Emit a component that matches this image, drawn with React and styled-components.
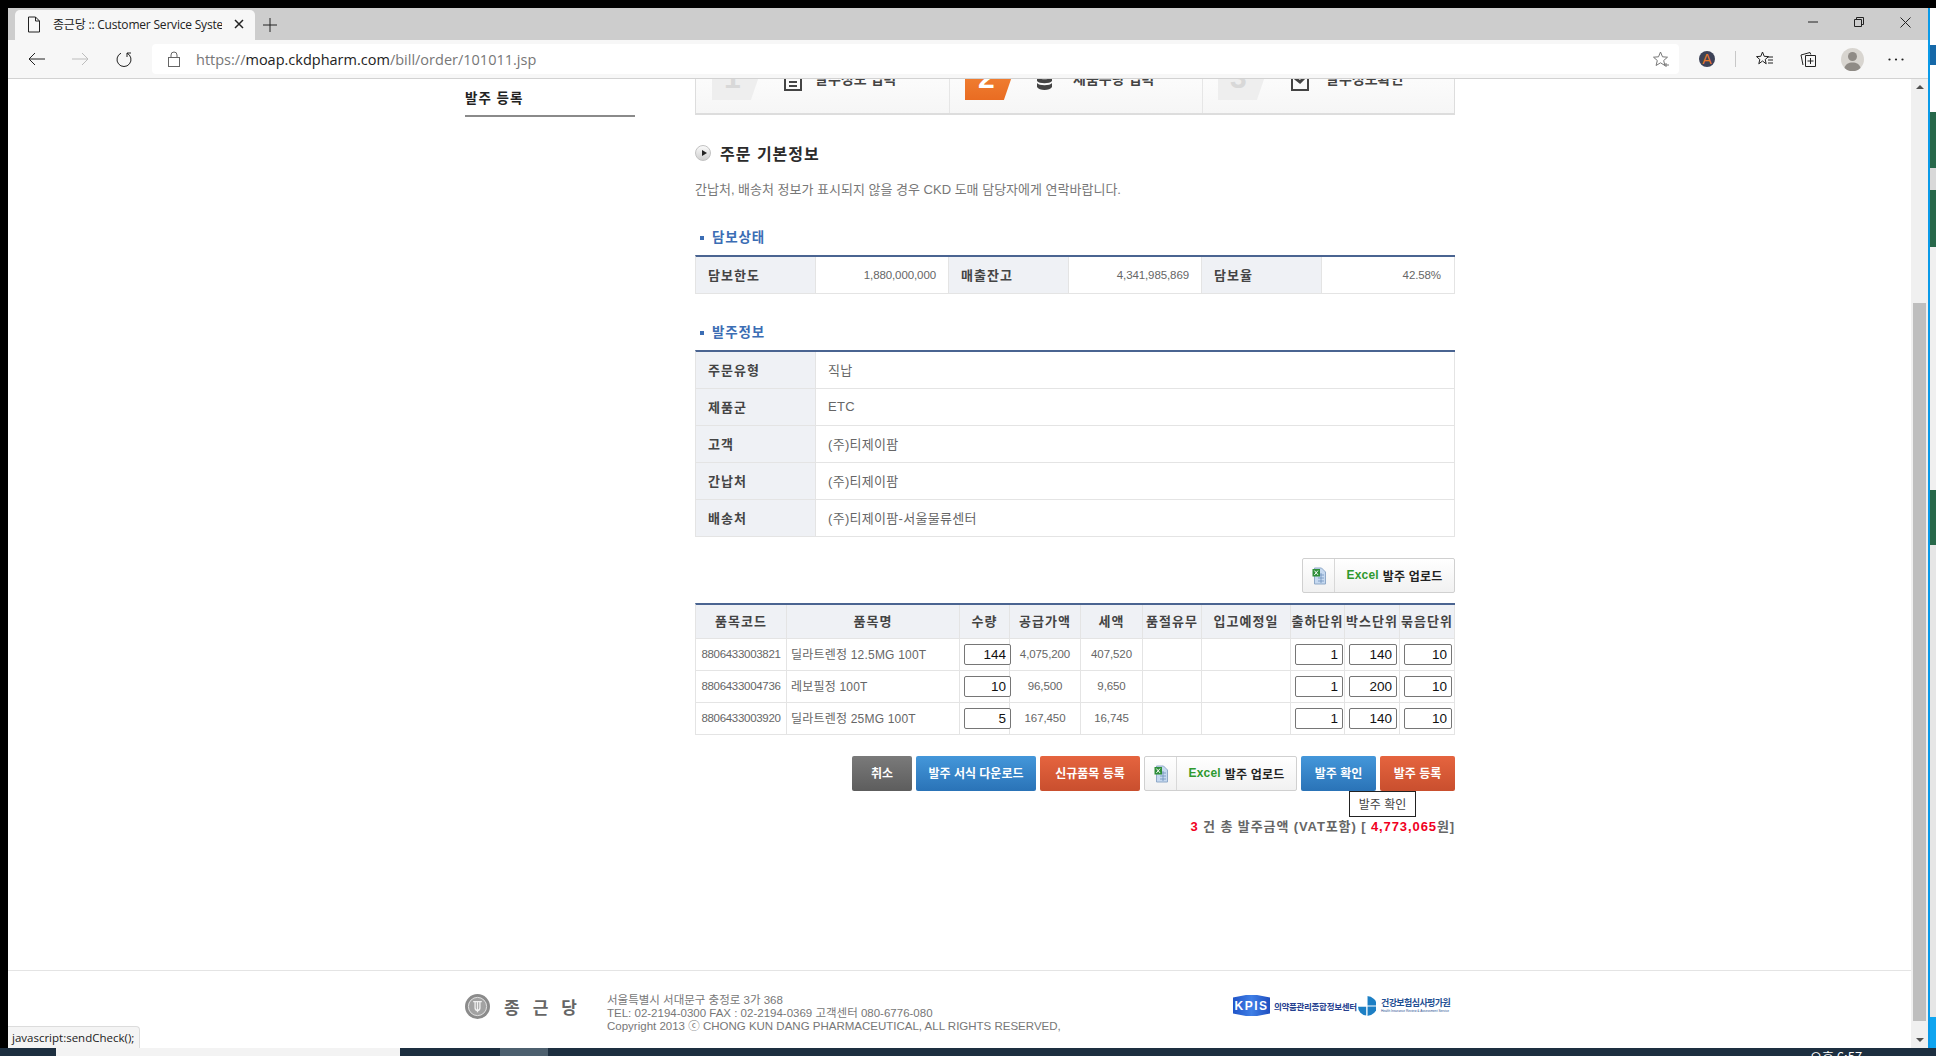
import React from 'react';
import styled, { createGlobalStyle } from 'styled-components';

const KR = `"Liberation Sans", "Noto Sans CJK KR", sans-serif`;

const GlobalStyle = createGlobalStyle`
  * { box-sizing: border-box; }
  html, body { margin: 0; height: 100%; overflow: hidden; background: #000; }
  body { font-family: ${KR}; }
`;

const Desktop = styled.div`
  width: 1936px;
  height: 1056px;
  display: flex;
  flex-direction: column;
  background: #000;
`;

const DesktopBody = styled.div`
  flex: 1;
  min-height: 0;
  display: flex;
  padding: 8px 0 0 8px;
`;

const Window = styled.div`
  position: relative;
  width: 1920px;
  display: flex;
  flex-direction: column;
  background: #fff;
`;

/* ---------- browser chrome ---------- */
const TabStrip = styled.div`
  height: 32px;
  flex: none;
  display: flex;
  align-items: flex-end;
  padding-left: 7px;
  background: #cdcdcd;
`;

const Tab = styled.div`
  width: 240px;
  height: 30px;
  display: flex;
  align-items: center;
  padding: 0 11px 2px 12px;
  background: #f7f7f7;
  border-radius: 5px 5px 0 0;
`;

const TabTitle = styled.span`
  flex: 1;
  margin: 0 12px;
  font: 12px "Open Sans", "Noto Sans CJK KR", sans-serif;
  letter-spacing: -0.2px;
  color: #222;
  white-space: nowrap;
  overflow: hidden;
`;

const NewTab = styled.div`
  width: 30px;
  height: 30px;
  display: flex;
  align-items: center;
  justify-content: center;
`;

const WindowButtons = styled.div`
  margin-left: auto;
  height: 32px;
  display: flex;
  align-items: center;
  padding-bottom: 4px;
`;

const WindowButton = styled.div`
  width: 46px;
  display: flex;
  justify-content: center;
`;

const Toolbar = styled.div`
  height: 39px;
  flex: none;
  display: flex;
  align-items: center;
  padding: 0 6px;
  background: #f7f7f7;
  border-bottom: 1px solid #d2d2d2;
`;

const ToolButton = styled.div`
  width: 44px;
  height: 30px;
  flex: none;
  display: flex;
  align-items: center;
  justify-content: center;
`;

const AddressBar = styled.div`
  width: 1527px;
  height: 30px;
  margin: 0 6px;
  display: flex;
  align-items: center;
  padding: 0 9px 0 15px;
  background: #fff;
  border-radius: 4px;
`;

const Url = styled.div`
  margin-left: 15px;
  font: 14.5px "Open Sans", sans-serif;
  color: #777;
  flex: 1;
  b { font-weight: 400; color: #222; }
`;

const ToolSeparator = styled.div`
  width: 1px;
  height: 16px;
  margin: 0 6px;
  background: #c8c8c8;
`;

const ExtensionBadge = styled.div`
  width: 16px;
  height: 16px;
  border-radius: 50%;
  display: flex;
  align-items: center;
  justify-content: center;
  background: #3d4257;
  color: #e8782a;
  font: 400 14px "Liberation Sans", sans-serif;
`;

/* ---------- page ---------- */
const Viewport = styled.div`
  flex: 1;
  min-height: 0;
  display: flex;
`;

const Page = styled.div`
  flex: 1;
  min-width: 0;
  display: flex;
  flex-direction: column;
  overflow: hidden;
  background: #fff;
`;

const Scrollbar = styled.div`
  width: 17px;
  flex: none;
  display: flex;
  flex-direction: column;
  align-items: center;
  background: #f0f0f0;
`;

const ScrollArrow = styled.div`
  height: 16px;
  flex: none;
  display: flex;
  align-items: center;
  justify-content: center;
  &::before {
    content: '';
    border-left: 4px solid transparent;
    border-right: 4px solid transparent;
    ${p => (p.$down ? 'border-top: 4px solid #505050;' : 'border-bottom: 4px solid #505050;')}
  }
`;

const ScrollTrack = styled.div`
  flex: 1;
  width: 13px;
  padding: 208px 0 11px;
  display: flex;
`;

const ScrollThumb = styled.div`
  flex: 1;
  background: #bebebe;
`;

const Main = styled.div`
  flex: 1;
  min-height: 0;
  display: flex;
  padding-left: 457px;
`;

const Sidebar = styled.div`
  width: 170px;
  flex: none;
`;

const SideTitle = styled.div`
  height: 38px;
  padding: 12px 0 0;
  border-bottom: 2px solid #8a8a8a;
  font-size: 13.5px;
  line-height: 16px;
  font-weight: 700;
  letter-spacing: 1px;
  color: #222;
`;

const Content = styled.div`
  width: 760px;
  flex: none;
  margin: -24px 0 0 60px;
`;

const Steps = styled.div`
  height: 60px;
  display: grid;
  grid-template-columns: 253px 253px 254px;
  background: linear-gradient(#fff, #f6f6f6);
  border: 1px solid #ddd;
  border-bottom-width: 2px;
`;

const Step = styled.div`
  display: flex;
  align-items: flex-start;
  padding-left: ${p => p.$pad}px;
  & + & { border-left: 1px solid #e6e6e6; }
`;

const StepBadge = styled.div`
  width: 54px;
  height: 44px;
  flex: none;
  padding: 6px 0 0 ${p => (p.$active ? 13 : 12)}px;
  clip-path: polygon(0 0, 100% 0, 72% 100%, 0 100%);
  background: ${p => (p.$active ? 'linear-gradient(#f68d3e, #e96c22)' : '#eeeeee')};
  color: ${p => (p.$active ? '#fff' : '#d8d8d8')};
  font: 700 30px/32px "Liberation Sans", sans-serif;
`;

const StepIcon = styled.div`
  width: ${p => p.$w}px;
  height: 20px;
  flex: none;
  margin: 15px 0 0 ${p => p.$gap}px;
`;

const StepLabel = styled.div`
  margin: 15px 0 0 ${p => p.$gap}px;
  font-size: 14px;
  line-height: 16px;
  font-weight: 700;
  color: #444;
  white-space: nowrap;
`;

const Heading = styled.h2`
  margin: 28px 0 0;
  height: 20px;
  display: flex;
  align-items: center;
  gap: 9px;
  font-size: 16px;
  font-weight: 700;
  letter-spacing: 1px;
  color: #2b2b2b;
`;

const Bullet = styled.span`
  width: 16px;
  height: 16px;
  border-radius: 50%;
  border: 1px solid #c2c2c2;
  background: linear-gradient(#fafafa, #cfcfcf);
  display: flex;
  align-items: center;
  justify-content: center;
  &::before {
    content: '';
    border-left: 5px solid #222;
    border-top: 3px solid transparent;
    border-bottom: 3px solid transparent;
    margin-left: 2px;
  }
`;

const Notice = styled.p`
  margin: 19px 0 0;
  font-size: 13px;
  line-height: 16px;
  color: #777;
`;

const SubHeading = styled.h3`
  margin: ${p => p.$top}px 0 9px;
  padding-left: 17px;
  position: relative;
  font-size: 13.5px;
  line-height: 16px;
  font-weight: 700;
  letter-spacing: 0.8px;
  color: #3b6db4;
  &::before {
    content: '';
    position: absolute;
    left: 5px;
    top: 6px;
    width: 4px;
    height: 4px;
    background: #3b6db4;
  }
`;

const Table = styled.table`
  width: 760px;
  table-layout: fixed;
  border-collapse: separate;
  border-spacing: 0;
  border-top: 2px solid #4a6491;
  border-left: 1px solid #e4e4e4;
`;

const Th = styled.th`
  height: ${p => p.$h || 37}px;
  padding: 0 ${p => (p.$center ? 0 : 12)}px 2px;
  background: #eff1f5;
  border-right: 1px solid #e4e4e4;
  border-bottom: 1px solid #e4e4e4;
  text-align: ${p => (p.$center ? 'center' : 'left')};
  font-size: 13px;
  font-weight: 700;
  letter-spacing: 1px;
  color: #444;
  white-space: nowrap;
`;

const Td = styled.td`
  height: ${p => p.$h || 37}px;
  padding: 0 ${p => p.$pad ?? 12}px 2px;
  border-right: 1px solid #e4e4e4;
  border-bottom: 1px solid #e4e4e4;
  text-align: ${p => p.$align || 'left'};
  font-size: 13px;
  letter-spacing: 0.3px;
  color: #666;
  white-space: nowrap;
`;

const Amount = styled.span`
  font-size: 11.5px;
  letter-spacing: ${p => (p.$tight ? -0.3 : -0.1)}px;
`;

const ProductName = styled.span`
  font-size: 12px;
  letter-spacing: 0.2px;
`;

const QtyInput = styled.input`
  display: block;
  width: ${p => p.$w || 48}px;
  height: 21px;
  padding: 0 4px;
  margin: 2px 0 0 4px;
  border: 1px solid #767676;
  border-radius: 2px;
  background: #fff;
  text-align: right;
  font: 13.5px "Liberation Sans", sans-serif;
  color: #111;
  outline: none;
`;

const UploadRow = styled.div`
  display: flex;
  justify-content: flex-end;
  margin: 21px 0 10px;
`;

const ExcelButton = styled.div`
  width: 153px;
  height: 35px;
  flex: none;
  display: flex;
  border: 1px solid #d0d0d0;
  border-radius: 2px;
  background: linear-gradient(#fff, #f1f1f1);
  font-size: 12px;
  font-weight: 700;
  color: #222;
`;

const ExcelIconCell = styled.div`
  width: 32px;
  flex: none;
  display: flex;
  align-items: center;
  justify-content: center;
  border-right: 1px solid #d8d8d8;
`;

const ExcelLabel = styled.div`
  flex: 1;
  display: flex;
  align-items: center;
  justify-content: center;
  gap: 4px;
  padding-bottom: 1px;
  letter-spacing: 0.2px;
  span { color: #2f9a2f; }
`;

const ActionRow = styled.div`
  position: relative;
  display: flex;
  justify-content: flex-end;
  gap: 4px;
  margin-top: 21px;
`;

const toneMap = {
  gray: 'linear-gradient(#7a7a7a, #5d5d5d)',
  blue: 'linear-gradient(#4497da, #2a73b7)',
  red: 'linear-gradient(#e5643f, #c94f2e)',
};

const ActionButton = styled.div`
  width: ${p => p.$w}px;
  height: 35px;
  display: flex;
  align-items: center;
  justify-content: center;
  padding-bottom: 2px;
  border-radius: 2px;
  background: ${p => toneMap[p.$tone]};
  color: #fff;
  font-size: 12px;
  font-weight: 700;
`;

const Tooltip = styled.div`
  position: absolute;
  right: 39px;
  top: 35px;
  width: 67px;
  height: 26px;
  display: flex;
  align-items: center;
  justify-content: center;
  padding-bottom: 2px;
  background: #fff;
  border: 1px solid #222;
  font-size: 12px;
  color: #444;
`;

const Summary = styled.div`
  margin-top: 28px;
  text-align: right;
  font-size: 13px;
  line-height: 16px;
  font-weight: 700;
  letter-spacing: 0.9px;
  color: #666;
  em { font-style: normal; color: #f0001e; }
`;

/* ---------- footer ---------- */
const Footer = styled.footer`
  height: 78px;
  flex: none;
  display: flex;
  align-items: flex-start;
  padding: 22px 0 0 457px;
  border-top: 1px solid #e4e4e4;
`;

const BrandMark = styled.div`
  width: 142px;
  flex: none;
  display: flex;
  align-items: center;
  gap: 14px;
  padding-top: 1px;
`;

const BrandName = styled.span`
  font-size: 17px;
  font-weight: 700;
  letter-spacing: 13px;
  color: #666;
  white-space: nowrap;
`;

const FooterText = styled.div`
  width: 626px;
  flex: none;
  margin-top: 1px;
  font-size: 11.5px;
  line-height: 13px;
  color: #777;
  white-space: nowrap;
`;

const PartnerLogos = styled.div`
  width: 224px;
  flex: none;
  display: flex;
  align-items: center;
  margin-top: 2px;
`;

const KpisBadge = styled.div`
  width: 37px;
  height: 21px;
  flex: none;
  display: flex;
  align-items: center;
  justify-content: center;
  background: linear-gradient(90deg, #2054c8, #3f7fe6 50%, #1f4fc0);
  clip-path: polygon(0 12%, 35% 0, 65% 0, 100% 12%, 100% 88%, 65% 100%, 35% 100%, 0 88%);
  color: #fff;
  font: 700 12px "Liberation Sans", sans-serif;
  letter-spacing: 1.5px;
`;

const KpisName = styled.span`
  margin-left: 4px;
  width: 84px;
  flex: none;
  font-size: 8.5px;
  font-weight: 700;
  letter-spacing: -0.3px;
  color: #25408f;
  white-space: nowrap;
`;

const HiraText = styled.div`
  margin-left: 5px;
  color: #1f4f92;
  font-size: 9px;
  line-height: 12px;
  font-weight: 700;
  letter-spacing: -0.6px;
  white-space: nowrap;
  small {
    display: block;
    font-size: 3.2px;
    line-height: 5px;
    font-weight: 400;
    letter-spacing: 0;
  }
`;

const StatusBubble = styled.div`
  position: absolute;
  left: 0;
  bottom: 0;
  width: 132px;
  height: 22px;
  display: flex;
  align-items: center;
  padding-left: 4px;
  background: #f4f4f4;
  border: 1px solid #dcdcdc;
  border-width: 1px 1px 0 0;
  border-top-right-radius: 4px;
  font: 11.5px "Open Sans", sans-serif;
  color: #222;
`;

/* ---------- desktop edges ---------- */
const RightEdge = styled.div`
  width: 8px;
  flex: none;
  display: flex;
  flex-direction: column;
  border-left: 2px solid #0a9ae8;
`;

const EdgeBlock = styled.div`
  height: ${p => p.$h}px;
  flex: none;
  background: ${p => p.$c};
`;

const Taskbar = styled.div`
  height: 8px;
  flex: none;
  display: flex;
  background: #1d2f40;
  overflow: hidden;
`;

const TaskSearch = styled.div`
  width: 344px;
  margin-left: 56px;
  background: #f3f3f3;
`;

const TaskActive = styled.div`
  width: 48px;
  margin-left: 100px;
  background: #4c5f6e;
`;

const TaskClock = styled.div`
  margin-left: auto;
  width: 126px;
  padding-top: 1px;
  font: 13px/16px "Noto Sans CJK KR", sans-serif;
  color: #fff;
`;

/* ---------- icons ---------- */
const Icon = ({ w = 16, h = 16, children }) => (
  <svg width={w} height={h} viewBox={`0 0 ${w} ${h}`} fill="none" stroke="#222" strokeWidth="1">
    {children}
  </svg>
);

const ExcelIcon = () => (
  <svg width="14" height="18" viewBox="0 0 14 18">
    <path d="M2.5 1h7l4 4v12h-11z" fill="#c6d9f0" stroke="#8fa9c8" />
    <path d="M6 8h6M6 11h6M6 14h6M9 6v10" stroke="#6f93bd" strokeWidth="0.8" />
    <rect x="0.5" y="2" width="7.5" height="7.5" fill="#2f8f3a" />
    <path d="M2.4 3.6l3.6 4.3M6 3.6L2.4 7.9" stroke="#fff" strokeWidth="1" />
  </svg>
);

const Emblem = () => (
  <svg width="25" height="25" viewBox="0 0 26 26">
    <circle cx="13" cy="13" r="13" fill="#8b8b8b" />
    <circle cx="13" cy="13" r="9.5" fill="#a2a2a2" stroke="#e2e2e2" strokeWidth="1" />
    <path d="M8.5 8h9M13 8v11M10.5 8v6.5c0 1.5 1 2.5 2.5 2.5s2.5-1 2.5-2.5V8" stroke="#f0f0f0" strokeWidth="1.4" fill="none" />
  </svg>
);

const HiraLogo = () => (
  <svg width="18" height="20" viewBox="0 0 20 22">
    <path d="M10 0a11 11 0 0 1 0 22z" fill="#1d7fc4" />
    <path d="M0 11.5a10 10 0 0 0 9.4 10V11.5z" fill="#1d7fc4" />
    <path d="M0 11h20M10 0v22" stroke="#fff" strokeWidth="1.2" />
  </svg>
);

const products = [
  { code: '8806433003821', name: '딜라트렌정 12.5MG 100T', qty: 144, supply: '4,075,200', tax: '407,520', box: 140 },
  { code: '8806433004736', name: '레보필정 100T', qty: 10, supply: '96,500', tax: '9,650', box: 200 },
  { code: '8806433003920', name: '딜라트렌정 25MG 100T', qty: 5, supply: '167,450', tax: '16,745', box: 140 },
];

const orderInfo = [
  ['주문유형', '직납'],
  ['제품군', 'ETC'],
  ['고객', '(주)티제이팜'],
  ['간납처', '(주)티제이팜'],
  ['배송처', '(주)티제이팜-서울물류센터'],
];

const productCols = [91, 173, 50, 71, 62, 59, 89, 54, 55, 55];
const productHeads = ['품목코드', '품목명', '수량', '공급가액', '세액', '품절유무', '입고예정일', '출하단위', '박스단위', '묶음단위'];

export default function App() {
  return (
    <Desktop>
      <GlobalStyle />
      <DesktopBody>
        <Window>
          <TabStrip>
            <Tab>
              <Icon w={14} h={17}>
                <path d="M1.5 1h7l4 4v11h-11zM8.5 1v4h4" />
              </Icon>
              <TabTitle>종근당 :: Customer Service System</TabTitle>
              <Icon w={10} h={10}>
                <path d="M1 1l8 8M9 1l-8 8" strokeWidth="1.5" />
              </Icon>
            </Tab>
            <NewTab>
              <Icon w={14} h={14}>
                <path d="M7 0v14M0 7h14" />
              </Icon>
            </NewTab>
            <WindowButtons>
              <WindowButton>
                <Icon w={10} h={10}><path d="M0 5h10" /></Icon>
              </WindowButton>
              <WindowButton>
                <Icon w={10} h={10}><path d="M.5 2.5h7v7h-7zM2.5 2.5v-2h7v7h-2" /></Icon>
              </WindowButton>
              <WindowButton>
                <Icon w={11} h={11}><path d="M.5.5l10 10M10.5.5l-10 10" /></Icon>
              </WindowButton>
            </WindowButtons>
          </TabStrip>
          <Toolbar>
            <ToolButton>
              <Icon w={17} h={14}><path d="M17 7H1M7 1L1 7l6 6" /></Icon>
            </ToolButton>
            <ToolButton>
              <svg width="17" height="14" viewBox="0 0 17 14" fill="none" stroke="#bdbdbd"><path d="M0 7h16M10 1l6 6-6 6" /></svg>
            </ToolButton>
            <ToolButton>
              <Icon w={16} h={17}>
                <path d="M5 2.200a7 7 0 1 0 6 0M11 6V2h4" />
              </Icon>
            </ToolButton>
            <AddressBar>
              <svg width="14" height="16" viewBox="0 0 14 16" fill="none" stroke="#666">
                <rect x="1.5" y="6.5" width="11" height="9" />
                <path d="M4 6.5V4a3 3 0 0 1 6 0v2.5" />
              </svg>
              <Url>https://<b>moap.ckdpharm.com</b>/bill/order/101011.jsp</Url>
              <svg width="17" height="17" viewBox="0 0 17 17" fill="none" stroke="#777">
                <path d="M7.5 1l2 4.800 5 .4-3.800 3.300 1.200 5-4.400-2.700-4.400 2.700 1.200-5L.5 6.200l5-.4zM13 12v4M11 14h5" />
              </svg>
            </AddressBar>
            <ToolButton><ExtensionBadge>A</ExtensionBadge></ToolButton>
            <ToolSeparator />
            <ToolButton>
              <Icon w={17} h={16}>
                <path d="M6.5 1l1.700 4.300 4.300.3-3.300 2.900 1 4.300L6.5 10l-3.700 2.800 1-4.300L.5 5.600l4.300-.3zM11 6h6M12 9h5M12 12h5" />
              </Icon>
            </ToolButton>
            <ToolButton>
              <Icon w={16} h={16}>
                <path d="M3 14L1 4l9-2.500.8 2M5.500 4.500h10v11h-10zM10.500 7v6M7.500 10h6" />
              </Icon>
            </ToolButton>
            <ToolButton>
              <svg width="23" height="23" viewBox="0 0 23 23">
                <circle cx="11.5" cy="11.5" r="11.5" fill="#d8d5d0" />
                <circle cx="11.5" cy="8.5" r="4.5" fill="#8f8b86" />
                <path d="M3.500 20c1-4 4-5.500 8-5.500s7 1.500 8 5.500a11.500 11.500 0 0 1-16 0z" fill="#8f8b86" />
              </svg>
            </ToolButton>
            <ToolButton>
              <svg width="16" height="3" viewBox="0 0 16 3" fill="#222">
                <circle cx="1.5" cy="1.5" r="1.1" /><circle cx="8" cy="1.5" r="1.1" /><circle cx="14.5" cy="1.5" r="1.1" />
              </svg>
            </ToolButton>
          </Toolbar>
          <Viewport>
            <Page>
              <Main>
                <Sidebar>
                  <SideTitle>발주 등록</SideTitle>
                </Sidebar>
                <Content>
                  <Steps>
                    <Step $pad={16}>
                      <StepBadge>1</StepBadge>
                      <StepIcon $w={20} $gap={17}>
                        <Icon w={20} h={20}>
                          <path d="M2 2h16v17H2zM6 7h8M6 11h8M6 15h8" stroke="#444" strokeWidth="2" />
                        </Icon>
                      </StepIcon>
                      <StepLabel $gap={12}>발주정보 입력</StepLabel>
                    </Step>
                    <Step $pad={15}>
                      <StepBadge $active>2</StepBadge>
                      <StepIcon $w={15} $gap={18}>
                        <svg width="15" height="20" viewBox="0 0 15 20" fill="#444">
                          <ellipse cx="7.5" cy="4" rx="7.5" ry="3" />
                          <path d="M0 6c2 3 13 3 15 0v4c-2 3-13 3-15 0zM0 12c2 3 13 3 15 0v4c-2 4-13 4-15 0z" />
                        </svg>
                      </StepIcon>
                      <StepLabel $gap={21}>제품수량 입력</StepLabel>
                    </Step>
                    <Step $pad={15}>
                      <StepBadge>3</StepBadge>
                      <StepIcon $w={20} $gap={18}>
                        <Icon w={20} h={20}>
                          <path d="M2 2h16v17H2z" stroke="#444" strokeWidth="2" />
                          <path d="M5 7l5 4 8-8" stroke="#444" strokeWidth="3" />
                        </Icon>
                      </StepIcon>
                      <StepLabel $gap={16}>발주정보확인</StepLabel>
                    </Step>
                  </Steps>

                  <Heading><Bullet />주문 기본정보</Heading>
                  <Notice>간납처, 배송처 정보가 표시되지 않을 경우 CKD 도매 담당자에게 연락바랍니다.</Notice>

                  <SubHeading $top={32}>담보상태</SubHeading>
                  <Table>
                    <colgroup>
                      <col width="120" /><col width="133" /><col width="120" />
                      <col width="133" /><col width="120" /><col width="133" />
                    </colgroup>
                    <tbody>
                      <tr>
                        <Th>담보한도</Th>
                        <Td $align="right" $pad={12}><Amount>1,880,000,000</Amount></Td>
                        <Th>매출잔고</Th>
                        <Td $align="right" $pad={12}><Amount>4,341,985,869</Amount></Td>
                        <Th>담보율</Th>
                        <Td $align="right" $pad={13}><Amount>42.58%</Amount></Td>
                      </tr>
                    </tbody>
                  </Table>

                  <SubHeading $top={31}>발주정보</SubHeading>
                  <Table>
                    <colgroup><col width="120" /><col /></colgroup>
                    <tbody>
                      {orderInfo.map(([label, value]) => (
                        <tr key={label}>
                          <Th>{label}</Th>
                          <Td>{value}</Td>
                        </tr>
                      ))}
                    </tbody>
                  </Table>

                  <UploadRow>
                    <ExcelButton>
                      <ExcelIconCell><ExcelIcon /></ExcelIconCell>
                      <ExcelLabel><span>Excel</span>발주 업로드</ExcelLabel>
                    </ExcelButton>
                  </UploadRow>

                  <Table>
                    <colgroup>
                      {productCols.map((w, i) => <col key={i} width={w} />)}
                    </colgroup>
                    <thead>
                      <tr>
                        {productHeads.map(h => <Th key={h} $center $h={34}>{h}</Th>)}
                      </tr>
                    </thead>
                    <tbody>
                      {products.map(p => (
                        <tr key={p.code}>
                          <Td $h={32} $pad={0} $align="center"><Amount $tight>{p.code}</Amount></Td>
                          <Td $h={32} $pad={4}><ProductName>{p.name}</ProductName></Td>
                          <Td $h={32} $pad={0}><QtyInput $w={47} readOnly value={p.qty} /></Td>
                          <Td $h={32} $pad={0} $align="center"><Amount>{p.supply}</Amount></Td>
                          <Td $h={32} $pad={0} $align="center"><Amount>{p.tax}</Amount></Td>
                          <Td $h={32} />
                          <Td $h={32} />
                          <Td $h={32} $pad={0}><QtyInput readOnly value={1} /></Td>
                          <Td $h={32} $pad={0}><QtyInput readOnly value={p.box} /></Td>
                          <Td $h={32} $pad={0}><QtyInput readOnly value={10} /></Td>
                        </tr>
                      ))}
                    </tbody>
                  </Table>

                  <ActionRow>
                    <ActionButton $w={60} $tone="gray">취소</ActionButton>
                    <ActionButton $w={120} $tone="blue">발주 서식 다운로드</ActionButton>
                    <ActionButton $w={100} $tone="red">신규품목 등록</ActionButton>
                    <ExcelButton>
                      <ExcelIconCell><ExcelIcon /></ExcelIconCell>
                      <ExcelLabel><span>Excel</span>발주 업로드</ExcelLabel>
                    </ExcelButton>
                    <ActionButton $w={75} $tone="blue">발주 확인</ActionButton>
                    <ActionButton $w={75} $tone="red">발주 등록</ActionButton>
                    <Tooltip>발주 확인</Tooltip>
                  </ActionRow>
                  <Summary>
                    <em>3</em> 건 총 발주금액 (VAT포함) [ <em>4,773,065</em>원]
                  </Summary>
                </Content>
              </Main>
              <Footer>
                <BrandMark>
                  <Emblem />
                  <BrandName>종근당</BrandName>
                </BrandMark>
                <FooterText>
                  서울특별시 서대문구 충정로 3가 368<br />
                  TEL: 02-2194-0300 FAX : 02-2194-0369 고객센터 080-6776-080<br />
                  Copyright 2013 ⓒ CHONG KUN DANG PHARMACEUTICAL, ALL RIGHTS RESERVED,
                </FooterText>
                <PartnerLogos>
                  <KpisBadge>KPIS</KpisBadge>
                  <KpisName>의약품관리종합정보센터</KpisName>
                  <HiraLogo />
                  <HiraText>
                    건강보험심사평가원
                    <small>Health Insurance Review &amp; Assessment Service</small>
                  </HiraText>
                </PartnerLogos>
              </Footer>
            </Page>
            <Scrollbar>
              <ScrollArrow />
              <ScrollTrack><ScrollThumb /></ScrollTrack>
              <ScrollArrow $down />
            </Scrollbar>
          </Viewport>
          <StatusBubble>javascript:sendCheck();</StatusBubble>
        </Window>
        <RightEdge>
          <EdgeBlock $h={37} $c="#ffffff" />
          <EdgeBlock $h={20} $c="#1668a8" />
          <EdgeBlock $h={47} $c="#ffffff" />
          <EdgeBlock $h={56} $c="#27684a" />
          <EdgeBlock $h={22} $c="#d8d8d8" />
          <EdgeBlock $h={57} $c="#27684a" />
          <EdgeBlock $h={243} $c="#f0f0f0" />
          <EdgeBlock $h={55} $c="#27684a" />
          <EdgeBlock $h={472} $c="#e6e6e6" />
          <EdgeBlock $h={31} $c="#10a5f0" />
        </RightEdge>
      </DesktopBody>
      <Taskbar>
        <TaskSearch />
        <TaskActive />
        <TaskClock>오후 6:57</TaskClock>
      </Taskbar>
    </Desktop>
  );
}
